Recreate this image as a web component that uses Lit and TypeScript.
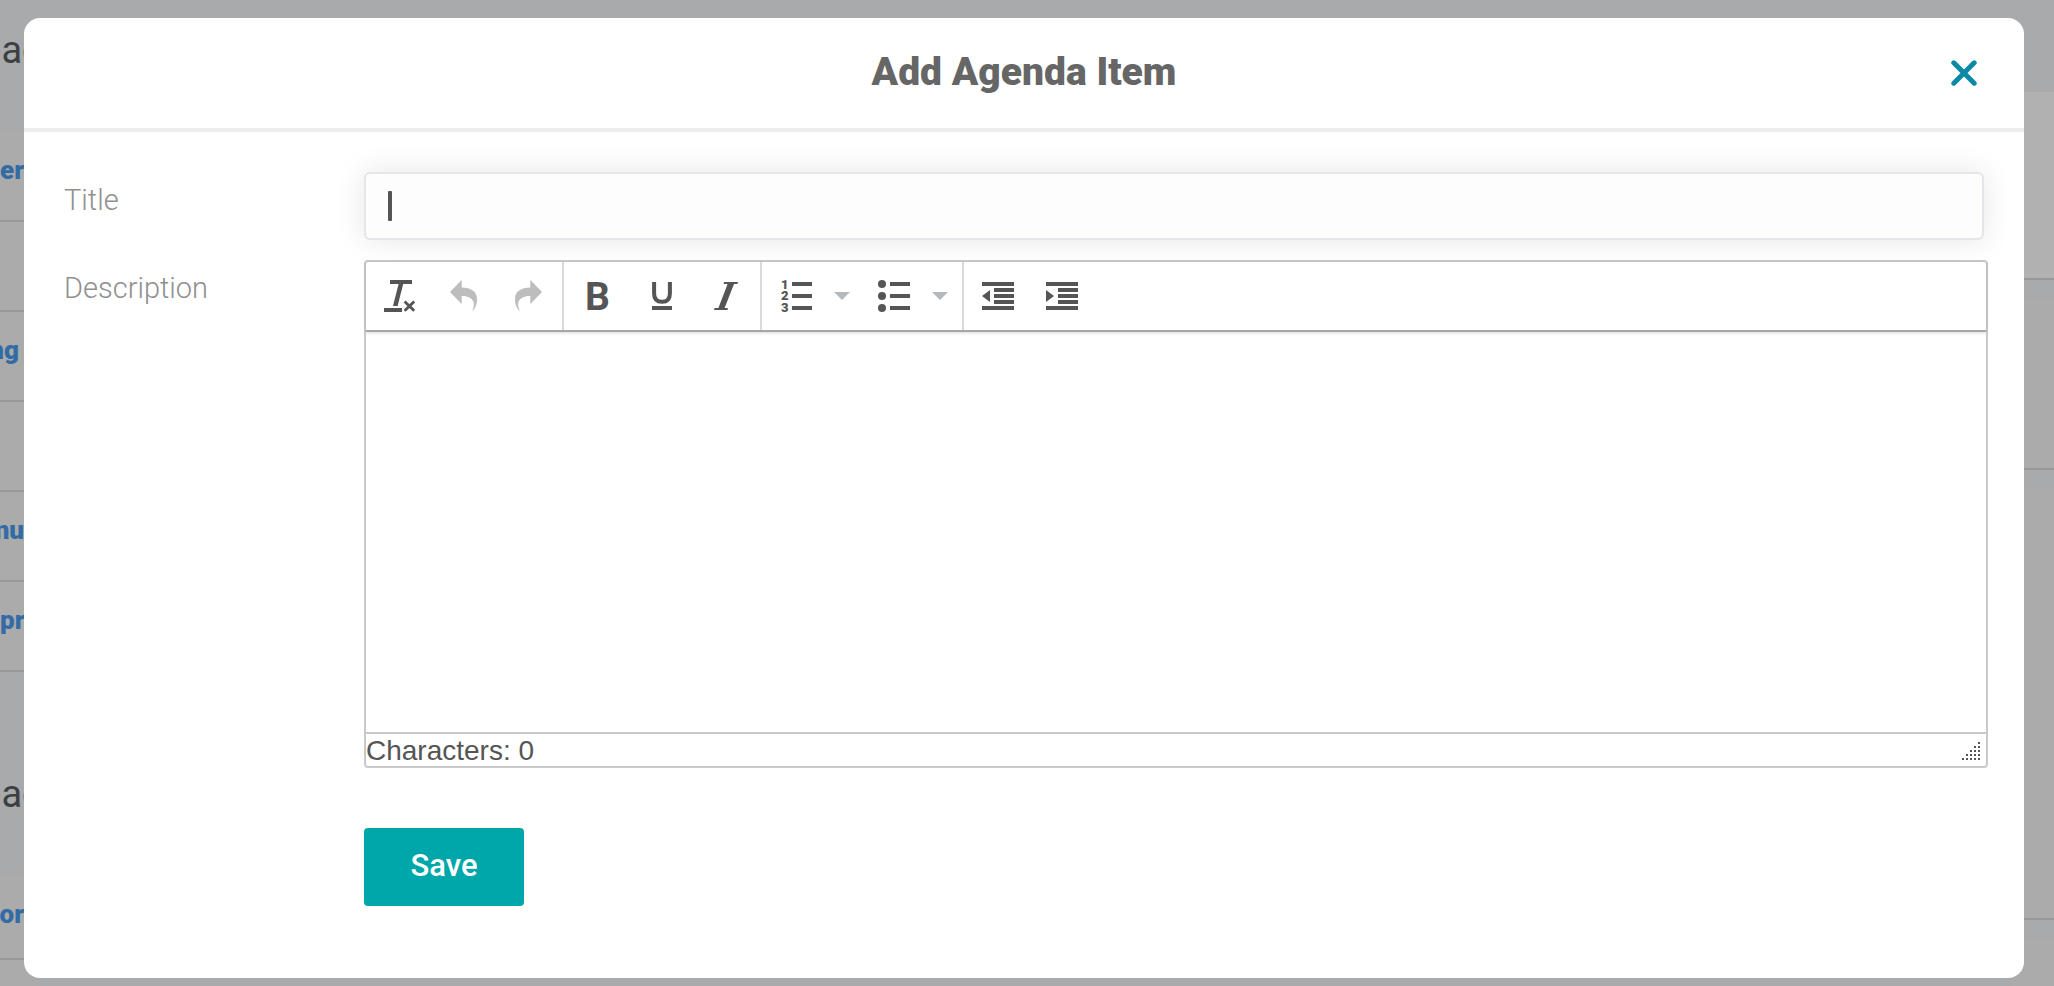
import { LitElement, html, css, svg, TemplateResult } from "lit";
import { customElement, state } from "lit/decorators.js";

interface Tool {
  name: string;
  icon: TemplateResult;
  disabled?: boolean;
  menu?: string;
}

const back = svg`<path d="M2 12 L13.7 0 V7.6 C23 7.6 29 11.5 29 19 C29 25 27 29 23.8 31.5 C25.4 28.5 26 26.5 25.8 23.5 C25.3 18.5 20.5 16 13.7 16 V24 Z"/>`;

const groups: Tool[][] = [
  [
    {
      name: "Clear formatting",
      icon: svg`<rect x="6" width="22" height="4"/><path d="M14.6 4 H19.2 L13.6 26 H9 Z"/>
        <rect y="28" width="18" height="4"/>
        <path d="M20.6 21.4 L30.2 30.8 M30.2 21.4 L20.6 30.8" stroke="currentColor" stroke-width="2.8"/>`,
    },
    { name: "Undo", disabled: true, icon: back },
    { name: "Redo", disabled: true, icon: svg`<g transform="matrix(-1 0 0 1 32 0)">${back}</g>` },
  ],
  [
    { name: "Bold", icon: svg`<text class="bold" x="3" y="30">B</text>` },
    {
      name: "Underline",
      icon: svg`<path d="M8.1 2 V13.5 C8.1 19 11 21.8 16 21.8 C21 21.8 23.9 19 23.9 13.5 V2" fill="none" stroke="currentColor" stroke-width="4"/>
        <rect x="6" y="26" width="20" height="4"/>`,
    },
    {
      name: "Italic",
      icon: svg`<path d="M14.2 2 H28 L27.4 4 H24 L14.6 28 H18 L17.4 30 H4 L4.6 28 H8.4 L17.6 4 H13.6 Z"/>`,
    },
  ],
  [
    {
      name: "Numbered list",
      menu: "Numbered list styles",
      icon: svg`<text class="digit" x="1" y="9">1</text><text class="digit" x="1" y="20">2</text><text class="digit" x="1" y="32">3</text>
        <path d="M12 2h20v4H12z M12 14h20v4H12z M12 26h20v4H12z"/>`,
    },
    {
      name: "Bulleted list",
      menu: "Bulleted list styles",
      icon: svg`<circle cx="4" cy="4" r="4"/><circle cx="4" cy="16" r="4"/><circle cx="4" cy="28" r="4"/>
        <path d="M12 2h20v4H12z M12 14h20v4H12z M12 26h20v4H12z"/>`,
    },
  ],
  [
    {
      name: "Decrease indent",
      icon: svg`<path d="M0 2h32v4H0z M12 8h20v4H12z M12 14h20v4H12z M12 20h20v4H12z M0 26h32v4H0z M0 16L8 10V22z"/>`,
    },
    {
      name: "Increase indent",
      icon: svg`<path d="M0 2h32v4H0z M12 8h20v4H12z M12 14h20v4H12z M12 20h20v4H12z M0 26h32v4H0z M8 16L0 10V22z"/>`,
    },
  ],
];

@customElement("agenda-backdrop")
class AgendaBackdrop extends LitElement {
  static styles = css`
    :host {
      display: flex;
      justify-content: space-between;
      overflow: hidden;
      background: #a8aaac;
      font-family: Roboto, sans-serif;
    }
    .column {
      width: 42px;
    }
    .heading {
      box-sizing: border-box;
      height: 132px;
      margin: 0;
      padding-top: 30px;
      display: flex;
      justify-content: flex-end;
      color: #3d4043;
      font-size: 38px;
      line-height: 40px;
      font-weight: 400;
    }
    .heading.second {
      height: 204px;
      padding-top: 102px;
    }
    .row {
      box-sizing: border-box;
      height: 90px;
      padding-top: 22px;
      border-bottom: 2px solid #989898;
      background: #ababab;
      display: flex;
      line-height: 32px;
    }
    .row.last {
      height: 84px;
    }
    .row a {
      width: 24px;
      display: flex;
      color: #336ba5;
      font-size: 26px;
      font-weight: 900;
      text-decoration: none;
    }
    .row a.end {
      justify-content: flex-end;
    }
    .row a.short {
      width: 19px;
    }
    .rest {
      height: 200px;
      background: #ababab;
    }
    .card {
      box-sizing: border-box;
      margin-bottom: 20px;
      border-bottom: 2px solid #989898;
      background: #ababab;
    }
    .card.first {
      height: 188px;
      margin-top: 92px;
      background: #b1b1b1;
    }
    .card.small {
      height: 170px;
    }
    .card.tall {
      height: 430px;
    }
  `;

  render() {
    return html`
      <div class="column">
        <h2 class="heading">pac</h2>
        <div class="row"><a href="#">er</a></div>
        <div class="row"></div>
        <div class="row"><a class="end short" href="#">ng</a></div>
        <div class="row"></div>
        <div class="row"><a class="end" href="#">nu</a></div>
        <div class="row"><a href="#">pr</a></div>
        <h2 class="heading second">pac</h2>
        <div class="row last"><a class="end" href="#">or</a></div>
        <div class="rest"></div>
      </div>
      <div class="column">
        <div class="card first"></div>
        <div class="card small"></div>
        <div class="card tall"></div>
        <div class="rest"></div>
      </div>
    `;
  }
}

@customElement("app-root")
class AppRoot extends LitElement {
  static styles = css`
    :host {
      display: grid;
      grid-template: minmax(100vh, auto) / minmax(0, 1fr);
      overflow: hidden;
      font-family: Roboto, sans-serif;
      color: #555;
    }
    agenda-backdrop {
      grid-area: 1 / 1;
      height: 0;
      min-height: 100%;
    }
    .dialog {
      grid-area: 1 / 1;
      z-index: 1;
      align-self: start;
      margin: 18px 30px 8px 24px;
      border-radius: 16px;
      background: #fff;
    }
    .header {
      display: grid;
      grid-template-columns: 64px 1fr 64px;
      align-items: center;
      height: 110px;
      padding: 0 28px;
      border-bottom: 4px solid #ededed;
    }
    .header h1 {
      grid-column: 2;
      margin: 0;
      padding-bottom: 2px;
      font-size: 39px;
      line-height: 44px;
      font-weight: 900;
      text-align: center;
      color: #666;
    }
    button {
      padding: 0;
      border: 0;
      background: none;
      color: inherit;
      font: inherit;
      cursor: pointer;
    }
    .close {
      width: 64px;
      height: 64px;
      display: grid;
      place-items: center;
      color: #0b89a6;
    }
    .form {
      display: grid;
      grid-template-columns: 300px minmax(0, 1fr);
      row-gap: 20px;
      padding: 40px 36px 72px 40px;
    }
    .label {
      padding-top: 10px;
      font-size: 29px;
      line-height: 36px;
      font-weight: 300;
      color: #8f8f8f;
    }
    .title-box {
      position: relative;
      margin-right: 4px;
    }
    .title {
      box-sizing: border-box;
      display: block;
      width: 100%;
      height: 68px;
      padding: 0 22px;
      border: 2px solid #e4e6e9;
      border-radius: 6px;
      outline: 0;
      background: #fdfdfd;
      box-shadow: 0 0 30px rgba(0, 0, 0, 0.1);
      color: #555;
      caret-color: transparent;
      font: 28px Roboto, sans-serif;
    }
    .caret {
      position: absolute;
      left: 24px;
      top: 19px;
      width: 4px;
      height: 30px;
      border-radius: 1px;
      background: #555;
      pointer-events: none;
    }
    .editor {
      position: relative;
      border: 2px solid #c9c9c9;
      border-radius: 4px;
      background: #fff;
    }
    .toolbar {
      display: flex;
      height: 68px;
      border-bottom: 2px solid #a6a6a6;
      box-shadow: 0 1px 3px rgba(0, 0, 0, 0.15);
    }
    .group {
      display: flex;
      align-items: center;
      padding: 0 2px;
      border-right: 2px solid #d9d9d9;
    }
    .group:last-child {
      border-right: 0;
    }
    .tool {
      display: grid;
      place-items: center;
      width: 64px;
      height: 64px;
    }
    .tool svg {
      overflow: visible;
      fill: currentColor;
    }
    .tool:disabled {
      color: #bdbdbd;
    }
    .bold {
      font: 700 39px Roboto, sans-serif;
    }
    .digit {
      font: 900 13px Roboto, sans-serif;
    }
    .menu {
      display: grid;
      place-items: center;
      width: 28px;
      height: 64px;
      margin-right: 6px;
      color: #b3b9bd;
    }
    .menu svg {
      fill: currentColor;
    }
    .text {
      box-sizing: border-box;
      display: block;
      width: 100%;
      height: 400px;
      padding: 16px;
      border: 0;
      outline: 0;
      resize: none;
      background: transparent;
      color: #555;
      font: 28px "Liberation Sans", sans-serif;
    }
    .status {
      display: flex;
      justify-content: space-between;
      align-items: center;
      height: 30px;
      padding: 2px 6px 0 0;
      border-top: 2px solid #c9c9c9;
      font: 28px/30px "Liberation Sans", sans-serif;
    }
    .save {
      grid-column: 2;
      justify-self: start;
      width: 160px;
      height: 78px;
      margin-top: 40px;
      padding-bottom: 4px;
      border-radius: 4px;
      background: #00a7aa;
      color: #fff;
      font-size: 31px;
      font-weight: 500;
    }
  `;

  @state() private count = 0;

  private onInput(e: Event) {
    this.count = (e.target as HTMLTextAreaElement).value.length;
  }

  private tool(t: Tool) {
    return html`<button class="tool" type="button" aria-label=${t.name} ?disabled=${t.disabled}>
        <svg width="32" height="32" viewBox="0 0 32 32" aria-hidden="true">${t.icon}</svg>
      </button>
      ${t.menu
        ? html`<button class="menu" type="button" aria-label=${t.menu}>
            <svg width="16" height="8" viewBox="0 0 16 8" aria-hidden="true"><path d="M0 0H16L8 8Z" /></svg>
          </button>`
        : ""}`;
  }

  private grip() {
    const dots = [];
    for (let row = 0; row < 5; row++) {
      for (let col = 4 - row; col < 5; col++) {
        dots.push(svg`<rect x=${col * 4} y=${row * 4} width="2" height="2"/>`);
      }
    }
    return html`<svg width="18" height="18" viewBox="0 0 18 18" fill="#555" aria-hidden="true">${dots}</svg>`;
  }

  render() {
    return html`
      <agenda-backdrop aria-hidden="true"></agenda-backdrop>
      <section class="dialog" role="dialog" aria-labelledby="heading">
        <header class="header">
          <h1 id="heading">Add Agenda Item</h1>
          <button class="close" type="button" aria-label="Close">
            <svg width="26" height="26" viewBox="0 0 26 26" aria-hidden="true">
              <path d="M2.8 2.8 L23.2 23.2 M23.2 2.8 L2.8 23.2" stroke="currentColor" stroke-width="5" stroke-linecap="round" />
            </svg>
          </button>
        </header>
        <form class="form" @submit=${(e: Event) => e.preventDefault()}>
          <label class="label" for="title">Title</label>
          <div class="title-box">
            <input class="title" id="title" type="text" autocomplete="off" />
            <span class="caret"></span>
          </div>
          <label class="label" for="description">Description</label>
          <div class="editor">
            <div class="toolbar" role="toolbar" aria-label="Formatting">
              ${groups.map((g) => html`<div class="group">${g.map((t) => this.tool(t))}</div>`)}
            </div>
            <textarea class="text" id="description" @input=${this.onInput}></textarea>
            <div class="status"><span>Characters: ${this.count}</span>${this.grip()}</div>
          </div>
          <button class="save" type="submit">Save</button>
        </form>
      </section>
    `;
  }
}
